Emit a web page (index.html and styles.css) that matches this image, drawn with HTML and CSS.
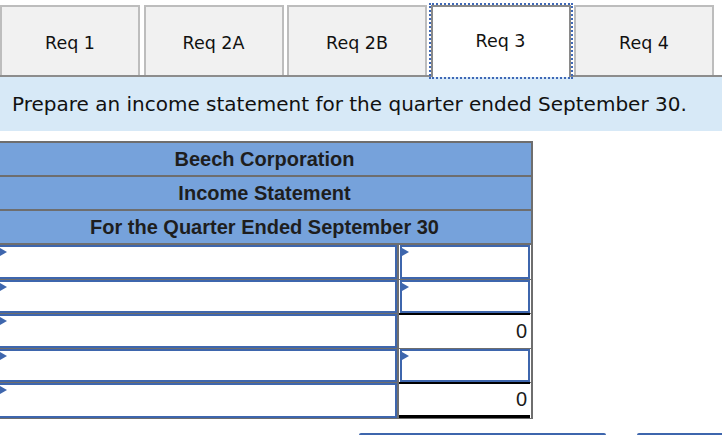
FILE: index.html
```html
<!DOCTYPE html>
<html>
<head>
<meta charset="utf-8">
<link rel="stylesheet" href="styles.css">
</head>
<body>
<div class="tabs">
  <div class="tab">Req 1</div>
  <div class="tab">Req 2A</div>
  <div class="tab">Req 2B</div>
  <div class="tab active">Req 3</div>
  <div class="tab">Req 4</div>
</div>
<div class="prompt">Prepare an income statement for the quarter ended September 30.</div>
<div class="stmt">
  <div class="hdr">Beech Corporation</div>
  <div class="hdr">Income Statement</div>
  <div class="hdr">For the Quarter Ended September 30</div>
  <div class="row">
    <div class="lc"><div class="inp"><span class="tri"></span></div></div>
    <div class="rc"><div class="inp"><span class="tri"></span></div></div>
  </div>
  <div class="row">
    <div class="lc"><div class="inp"><span class="tri"></span></div></div>
    <div class="rc"><div class="inp"><span class="tri"></span></div></div>
  </div>
  <div class="row">
    <div class="lc"><div class="inp"><span class="tri"></span></div></div>
    <div class="rc"><div class="total">0</div></div>
  </div>
  <div class="row">
    <div class="lc"><div class="inp"><span class="tri"></span></div></div>
    <div class="rc"><div class="inp"><span class="tri"></span></div></div>
  </div>
  <div class="row last">
    <div class="lc"><div class="inp"><span class="tri"></span></div></div>
    <div class="rc"><div class="total grand">0</div></div>
  </div>
</div>
<div class="nav">
  <div class="btn prev"></div>
  <div class="btn next"></div>
</div>
</body>
</html>
```

FILE: styles.css
```css
html, body {
  margin: 0;
  padding: 0;
  background: #ffffff;
  overflow: hidden;
}
body {
  width: 722px;
  height: 436px;
  font-family: "DejaVu Sans", Verdana, sans-serif;
  color: #111;
}
.tabs {
  display: flex;
  gap: 3.5px;
  align-items: flex-start;
  height: 70px;
  padding-top: 5px;
  border-bottom: 2px solid #8d8d8d;
}
.tab {
  box-sizing: border-box;
  width: 140px;
  height: 70px;
  flex: none;
  background: #f1f1f1;
  border: 2px solid #bdbdbd;
  border-bottom: none;
  font-size: 17.5px;
  line-height: 20px;
  padding-top: 26px;
  text-align: center;
  color: #111;
}
.tab.active {
  height: 72px;
  margin-bottom: -2px;
  background: #ffffff;
  border-color: #8a8a8a;
  padding-top: 24px;
  outline: 2px dotted #3f68b6;
}
.prompt {
  height: 54px;
  line-height: 54px;
  background: #d7e9f7;
  padding-left: 12px;
  font-size: 20px;
  color: #111;
  white-space: nowrap;
}
.stmt {
  margin-top: 10px;
  margin-left: -4px;
  width: 537px;
  box-sizing: border-box;
  border: 2px solid #6e6e6e;
  border-bottom-width: 1.5px;
  font-family: "Liberation Sans", Arial, sans-serif;
}
.hdr {
  height: 32px;
  line-height: 32px;
  background: #76a2db;
  border-bottom: 2px solid #6e6e6e;
  text-align: center;
  font-weight: bold;
  font-size: 20px;
  color: #1e1e1e;
}
.row {
  display: grid;
  grid-template-columns: 401px 1fr;
  height: 34.6px;
  box-sizing: border-box;
  border-bottom: 1px solid #6e6e6e;
}
.row.last {
  border-bottom: none;
}
.lc {
  border-right: 2px solid #6e6e6e;
}
.rc {
  padding: 0 1px;
}
.inp {
  position: relative;
  box-sizing: border-box;
  height: 100%;
  border: 2px solid #3e66ad;
  background: #fff;
}
.tri {
  position: absolute;
  left: 0;
  top: 1px;
  width: 0;
  height: 0;
  border-top: 4px solid transparent;
  border-bottom: 4px solid transparent;
  border-left: 7px solid #3e66ad;
}
.total {
  box-sizing: border-box;
  height: calc(100% + 1.5px);
  margin-top: -1.5px;
  margin-left: -1px;
  border-top: 2px solid #000;
  text-align: right;
  padding-right: 3px;
  font-size: 20px;
  line-height: 32px;
  color: #1a1a1a;
}
.total.grand {
  border-bottom: 3px solid #000;
  line-height: 30px;
}
.nav {
  display: flex;
  gap: 31px;
  margin-top: 14.5px;
  margin-left: 359px;
}
.btn {
  flex: none;
  height: 2px;
  box-sizing: border-box;
  border-top: 2px solid #3e66ad;
  border-radius: 4px 4px 0 0;
}
.btn.prev {
  width: 247px;
}
.btn.next {
  width: 85px;
  border-top-right-radius: 0;
}
```
